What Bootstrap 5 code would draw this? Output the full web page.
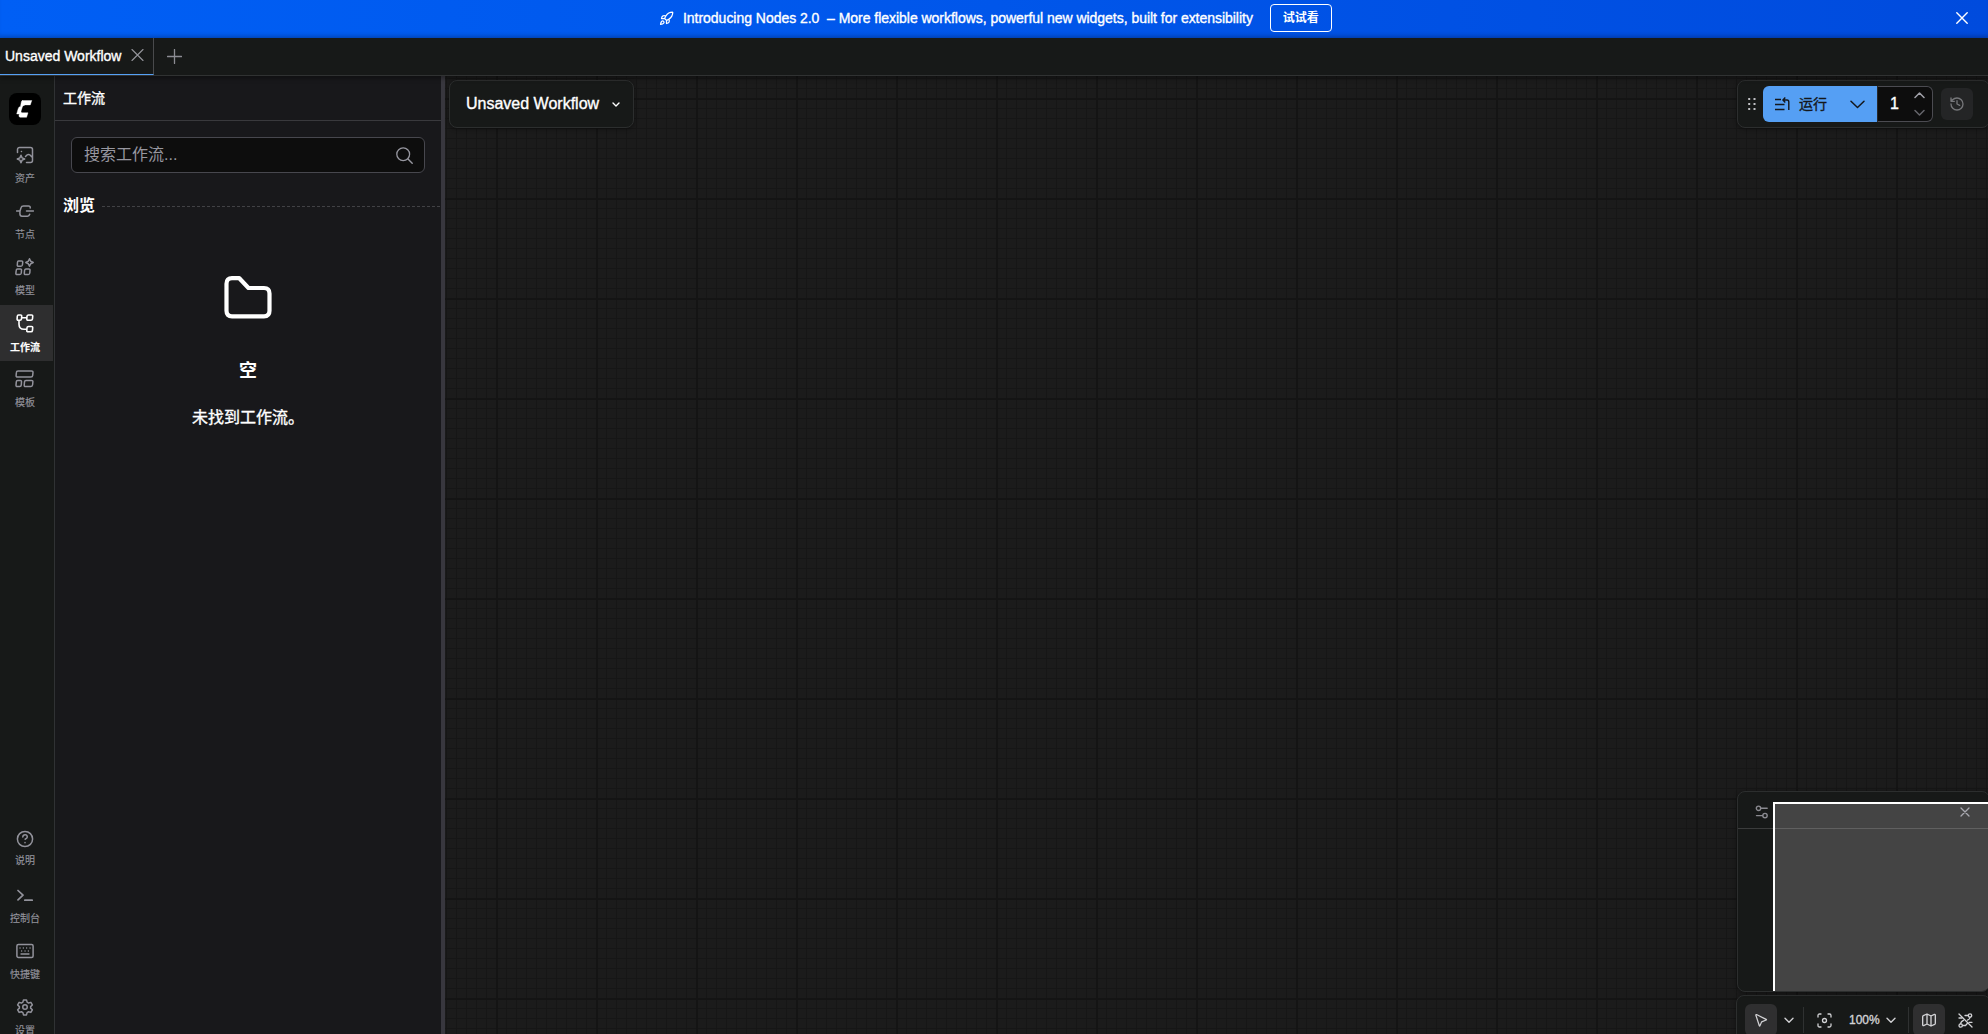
<!DOCTYPE html>
<html lang="zh-CN" data-bs-theme="dark">
<head>
<meta charset="utf-8">
<meta name="viewport" content="width=device-width, initial-scale=1">
<title>Unsaved Workflow</title>
<link rel="stylesheet" href="https://cdn.jsdelivr.net/npm/bootstrap@5.3.0/dist/css/bootstrap.min.css">
<style>
html,body{height:100%}
body{font-family:"Liberation Sans","Noto Sans CJK SC",sans-serif;font-size:14px;line-height:1.2;background:#171918;color:#fff;overflow:hidden}
svg{display:block;flex:none;fill:none;stroke:currentColor;stroke-width:2;stroke-linecap:round;stroke-linejoin:round}
.heavy{-webkit-text-stroke:.35px currentColor}
.banner{height:38px;flex:none;background:linear-gradient(90deg,#005ff5,#0056ea 50%,#004bdd);box-shadow:inset 0 -5px 5px -3px #0003;padding-bottom:2px}
.banner .rocket{margin-left:659px}
.banner-text{margin-left:9px;white-space:pre;letter-spacing:-.03px}
.banner-btn{margin-left:17px;width:62px;height:28px;padding:0;border:1px solid #fff;border-radius:4px;font-size:12px;font-weight:700;color:#fff;line-height:24px}
.tabs{height:38px;flex:none;border-bottom:1px solid #303232;position:relative;z-index:3;box-shadow:0 2px 5px #0006}
.tab-item{width:154px;height:37px;border-right:1px solid #494a4c;border-bottom:1px solid #55a0f5;padding:0 0 0 5px}
.tab-item svg{margin-bottom:2px}
.rail{width:55px;flex:none;border-right:1px solid #303234;padding-top:17px}
.logo-tile{width:32px;height:32px;border-radius:8px;background:#000;margin-left:9px;margin-bottom:12px;padding:7px}
.rail-item{height:56px;width:53px;flex:none;padding:9px 3px 0 0;color:#92929b;font-size:10px;line-height:14px;gap:8px;-webkit-text-stroke:.15px currentColor}
.rail-item svg{margin-right:1px}
.rail-item.active{background:#2e2e2f;color:#fff;font-weight:700}
.panel{width:386px;flex:none;background:#18181b}
.panel-head{height:45px;border-bottom:1px solid #39393d;padding:1px 0 0 8px}
.search-box{height:36px;margin:16px 16px 0;border:1px solid #47474e;border-radius:6px;background:#0d0d0d;color:#9797a0;font-size:16px;padding:0 11px 0 12px}
.browse{margin-top:21px;height:24px;padding-left:8px;font-size:16px;font-weight:700;gap:7px}
.dashes{height:1px;flex:1;background:repeating-linear-gradient(90deg,#414145 0 3px,transparent 3px 5px)}
.gutter{width:4px;flex:none;background:#38373e}
.graph{flex:1;min-width:0;background:
 linear-gradient(90deg,#141414 2px,transparent 2px) 51px 0/100px 100px,
 linear-gradient(#141414 2px,transparent 2px) 0 22px/100px 100px,
 linear-gradient(90deg,#161616 1px,transparent 1px) 1px 0/10px 10px,
 linear-gradient(#161616 1px,transparent 1px) 0 2px/10px 10px,#1b1b1b;padding:4px 0 0 4px}
.float-box{background:#171918;border:1px solid #2c2e2e;border-radius:8px;box-shadow:0 1px 4px #0006}
.crumb{width:185px;height:48px;padding:0 12px 1px 16px;font-size:16px}
.runbar{width:253px;height:48px;margin-right:-2px;padding:0 0 0 10px}
.run-btn{width:114px;height:36px;background:#559ff4;color:#14171b;border-radius:6px 0 0 6px;font-size:14px;padding:0 12px;margin-left:7px}
.count-box{width:56px;height:36px;background:#0d0d0d;border:1px solid #4b4b51;border-left-color:#26282b;border-radius:0 6px 6px 0;padding:0 7px 0 12px;font-size:16px}
.history{width:32px;height:32px;border-radius:6px;background:#242526;color:#76777a;margin-left:8px}
.bottom-stack{width:254px;margin-right:-2px}
.minimap{width:253px;height:201px;margin-left:1px;position:relative;overflow:hidden}
.minimap-head{height:37px;border-bottom:1px solid #3b3c3c;color:#8a8a90}
.viewport{position:absolute;left:35px;top:10px;right:-4px;bottom:0;border:2px solid #fff;border-width:2px 0 0 2px;background:#444}
.viewport-line{height:1px;margin-top:24px;background:#606060}
.toolbar-box{height:50px;width:255px;margin-top:3px;padding:8px 0 0 8px;color:#d2d2d5}
.tool-on{width:32px;height:32px;border-radius:6px;background:#2f2f30}
.bar-line{width:1px;height:26px;background:#2f3131}
.center-line{height:32px}
</style>
<script src="https://cdn.jsdelivr.net/npm/bootstrap@5.3.0/dist/js/bootstrap.bundle.min.js"></script>
</head>
<body class="d-flex flex-column">
<header class="banner d-flex align-items-center">
 <svg class="rocket" width="15" height="15" viewBox="0 0 24 24"><path d="M4.500 16.500c-1.500 1.300-2 5-2 5s3.700-.5 5-2c.7-.8.7-2.100-.1-2.900a2.200 2.200 0 0 0-2.900-.1zM12 15l-3-3a22 22 0 0 1 2-4A12.900 12.900 0 0 1 22 2c0 2.700-.8 7.500-6 11a22 22 0 0 1-4 2zM9 12H4s.6-3 2-4c1.600-1.100 5 0 5 0M12 15v5s3-.6 4-2c1.100-1.600 0-5 0-5"/></svg>
 <span class="banner-text heavy">Introducing Nodes 2.0&nbsp; – More flexible workflows, powerful new widgets, built for extensibility</span>
 <button class="btn banner-btn">试试看</button>
 <svg class="ms-auto" style="margin-right:20px" width="12" height="12" viewBox="0 0 12 12"><path stroke-width="1.400" d="M.8.8l10.400 10.400M11.200.8L.8 11.200"/></svg>
</header>
<nav class="tabs d-flex align-items-center">
 <div class="tab-item d-flex align-items-center"><span class="heavy">Unsaved Workflow</span>
  <svg class="ms-auto me-2" width="15" height="12" viewBox="0 0 12 12"><path stroke="#94949b" stroke-width="1.100" d="M.5.5l11 11M11.500.5l-11 11"/></svg></div>
 <svg style="margin-left:13px" width="15" height="15" viewBox="0 0 15 15"><path stroke="#8c8c93" stroke-width="1.300" d="M7.500 .5v14M.5 7.500h14"/></svg>
</nav>
<main class="d-flex flex-grow-1" style="min-height:0">
 <aside class="rail d-flex flex-column">
  <div class="logo-tile"><svg width="18" height="18" viewBox="0 0 18 18"><path fill="#fff" stroke-width=".4" d="M6.500 .4h9.300l-1.500 4.500H9.200q-2.200.3-2.800 1.900L5 11.200q-.1 1.400.9 1.600H12L10.600 17.300H4.200q-1.300-.2-1.300-1.500l.4-1.800H.7L2.100 8.900q.5-2.300 2.400-2.500L5.300 2Q5.600.5 6.500.4z"/></svg></div>
  <a class="rail-item d-flex flex-column align-items-center text-decoration-none"><svg width="18" height="18" viewBox="0 0 18 18"><path stroke-width="1.500" d="M1.500 6.500V3.500a2 2 0 0 1 2-2h11a2 2 0 0 1 2 2v11a2 2 0 0 1-2 2H10.500M9.500 10.500l1.500-1.500q1.500-1.200 3 0l2.200 2.200M5 9.300l1.100 2.600 2.600 1.100-2.600 1.100L5 16.700l-1.100-2.600L1.300 13l2.600-1.100zM5.400 5.400h.1"/></svg>资产</a>
  <a class="rail-item d-flex flex-column align-items-center text-decoration-none"><svg width="18" height="18" viewBox="0 0 18 18"><path stroke-width="1.500" d="M.5 9H4M10.500 9h7M4 9l-.1 2.700Q4 14.200 6 14.200h5.500q1.700 0 2.200-1.900M4 9l1-3.200Q5.500 4 7.500 4h5q2 0 1.700 2"/></svg>节点</a>
  <a class="rail-item d-flex flex-column align-items-center text-decoration-none"><svg width="19" height="18" viewBox="0 0 19 18"><path stroke-width="1.500" d="M14.500.8l1.200 2.500 2.500 1.200-2.500 1.200-1.200 2.500-1.200-2.500L10.800 4.500l2.500-1.200zM3.500 3h3q1.300 0 1.200 1.300l-.3 2.700q-.2 1.200-1.400 1.200H3.500Q2.200 8.200 2.300 7l.2-2.800Q2.600 3 3.500 3zM2.500 11h2.800q1.300 0 1.200 1.300l-.2 2.700q-.2 1.500-1.500 1.500H2Q.8 16.500.9 15.200l.3-2.800Q1.300 11 2.500 11zM11 11h2.800q1.300 0 1.200 1.300l-.2 2.700q-.2 1.500-1.500 1.500h-2.800q-1.300 0-1.200-1.300l.3-2.800Q9.800 11 11 11z"/></svg>模型</a>
  <a class="rail-item active d-flex flex-column align-items-center text-decoration-none"><svg width="18" height="19" viewBox="0 0 18 19"><path stroke-width="1.600" d="M2.500 1h2q1.300 0 1.200 1.200l-.2 2.600q-.2 1.400-1.500 1.400H2.300Q1 6.200 1.100 5l.2-2.700Q1.400 1 2.500 1zM12.500 1h3q1.300 0 1.200 1.200l-.2 2.600q-.2 1.400-1.500 1.400h-3q-1.300 0-1.200-1.300l.2-2.600Q11.300 1 12.500 1zM12.500 12.500h3q1.300 0 1.200 1.200l-.2 2.600q-.2 1.500-1.500 1.500h-3q-1.300 0-1.200-1.300l.2-2.700q.1-1.300 1.500-1.300zM5.800 3.700h5M3 6.200v4q0 5 5 5h2.500"/></svg>工作流</a>
  <a class="rail-item d-flex flex-column align-items-center text-decoration-none"><svg width="19" height="18" viewBox="0 0 19 18"><path stroke-width="1.500" d="M3 1h13.500q1.600 0 1.500 1.400l-.3 3q-.2 1.600-1.700 1.600H2.500Q1 7 1.100 5.600l.3-3.200Q1.500 1 3 1zM2.600 10.500h2.700q1.300 0 1.200 1.300l-.2 3q-.2 1.700-1.500 1.700H2.300Q.9 16.500 1 15.100l.3-3.200q.1-1.400 1.300-1.400zM11 10.500h5.500q1.500 0 1.400 1.300l-.3 3q-.2 1.700-1.600 1.700h-5.500q-1.400 0-1.300-1.400l.3-3.200q.1-1.400 1.500-1.400z"/></svg>模板</a>
  <div class="mt-auto" style="margin-bottom:-11px">
   <a class="rail-item d-flex flex-column align-items-center text-decoration-none" style="gap:6px"><svg width="18" height="18" viewBox="0 0 18 18"><circle cx="9" cy="9" r="7.600" stroke-width="1.500"/><path stroke-width="1.500" d="M6.800 7q.2-2.200 2.300-2.200T11.300 7q0 1.200-2.200 2.200M9 12.600v.1"/></svg>说明</a>
   <a class="rail-item d-flex flex-column align-items-center text-decoration-none"><svg width="16" height="18" viewBox="0 0 16 18"><path stroke-width="1.700" d="M1 4.500l5 4.700-5 4.700M7.800 14.200h7.500"/></svg>控制台</a>
   <a class="rail-item d-flex flex-column align-items-center text-decoration-none"><svg width="18" height="18" viewBox="0 0 18 18"><rect x=".9" y="2.500" width="16.200" height="13" rx="1.500" stroke-width="1.500"/><path stroke-width="1.300" d="M4 6h.1M7.300 6h.1M10.600 6h.1M14 6h.1M5.600 9h.1M9 9h.1M12.300 9h.1M5 12h8"/></svg>快捷键</a>
   <a class="rail-item d-flex flex-column align-items-center text-decoration-none"><svg width="18" height="18" viewBox="0 0 24 24"><circle cx="12" cy="12" r="3"/><path d="M10 2.500h4l.8 3 2 1.200 3-.9 2 3.500-2.300 2.200v2l2.300 2.200-2 3.500-3-.9-2 1.200-.8 3h-4l-.8-3-2-1.200-3 .9-2-3.500 2.300-2.200v-2L2.200 9.300l2-3.500 3 .9 2-1.200z"/></svg>设置</a>
  </div>
 </aside>
 <section class="panel">
  <div class="panel-head d-flex align-items-center heavy">工作流</div>
  <div class="search-box d-flex align-items-center justify-content-between">搜索工作流...
   <svg width="17" height="17" viewBox="0 0 17 17"><circle cx="7.200" cy="7.200" r="6.400" stroke-width="1.300"/><path stroke-width="1.400" d="M12 12l4.200 4.200"/></svg></div>
  <div class="browse d-flex align-items-center"><span>浏览</span><i class="dashes"></i></div>
  <div class="d-flex flex-column align-items-center" style="padding-top:58px">
   <svg width="48" height="43" viewBox="0 0 48 43"><path stroke-width="4.200" d="M8 2.200h7.300L24.500 12H40q5.500 0 5.500 5.500v17.300q0 5.500-5.500 5.500H8q-5.500 0-5.500-5.500V7.700Q2.500 2.200 8 2.200z"/></svg>
   <div class="fw-bold" style="font-size:18px;margin-top:42px">空</div>
   <div class="heavy" style="font-size:16px;margin-top:25px">未找到工作流。</div>
  </div>
 </section>
 <div class="gutter"></div>
 <section class="graph d-flex flex-column justify-content-between">
  <div class="d-flex justify-content-between">
   <div class="float-box crumb d-flex align-items-center justify-content-between heavy">Unsaved Workflow<svg width="10" height="10" viewBox="0 0 10 10"><path stroke-width="1.400" d="M2 4l3 3 3-3"/></svg></div>
   <div class="float-box runbar d-flex align-items-center">
    <svg width="8" height="14" viewBox="0 0 8 14"><path stroke="#c0c0c3" stroke-width="1.800" stroke-linecap="butt" d="M.2 2h2M5.500 2h2M.2 7h2M5.500 7h2M.2 12h2M5.500 12h2"/></svg>
    <div class="run-btn d-flex align-items-center"><svg width="15" height="14" viewBox="0 0 15 14"><path stroke-width="1.400" stroke-linecap="butt" d="M0 2.500h6M0 7.500h9.500M0 12.500h9.500M8 3h4q1.800 0 1.800 2v8M10.300.6L7.900 3l2.400 2.400"/></svg><span class="heavy" style="margin-left:9px">运行</span><svg class="ms-auto" width="15" height="9" viewBox="0 0 15 9"><path stroke-width="1.500" d="M1 1.200l6.500 6.300L14 1.200"/></svg></div>
    <div class="count-box d-flex align-items-center justify-content-between"><span class="heavy">1</span><svg width="11" height="24" viewBox="0 0 11 24"><path stroke="#a1a1a9" stroke-width="1.500" d="M1 5.500l4.500-4.500L10 5.500"/><path stroke="#65656b" stroke-width="1.500" d="M1 18.500L5.500 23l4.500-4.500"/></svg></div>
    <div class="history d-flex align-items-center justify-content-center"><svg width="16" height="16" viewBox="0 0 24 24"><path d="M3 12a9 9 0 1 0 9-9 9.700 9.700 0 0 0-6.700 2.700L3 8M3 3v5h5M12 7v5l4 2"/></svg></div>
   </div>
  </div>
  <div class="bottom-stack align-self-end d-flex flex-column" style="margin-bottom:-11px">
   <div class="float-box minimap">
    <div class="minimap-head d-flex align-items-center"><svg style="margin:3px 0 0 17px" width="14" height="14" viewBox="0 0 14 14"><circle cx="3.500" cy="3.300" r="2.200" stroke-width="1.400"/><circle cx="10" cy="10.600" r="2.200" stroke-width="1.400"/><path stroke-width="1.400" d="M5.700 3.300h6.500M1.500 10.600h6"/></svg></div>
    <div class="viewport"><svg style="position:absolute;left:185px;top:3px" width="10" height="10" viewBox="0 0 10 10"><path stroke="#a9a9b0" stroke-width="1.300" d="M1 1l8 8M9 1L1 9"/></svg><div class="viewport-line"></div></div>
   </div>
   <div class="float-box toolbar-box"><div class="d-flex align-items-center center-line">
    <div class="tool-on d-flex align-items-center justify-content-center"><svg width="15" height="15" viewBox="0 0 24 24"><path d="M3 3.500l5.500 17q.5 1 1-.1l2.700-6.200 7.300-3q1-.5 0-1L4 2.500q-1.200-.4-1 1z"/></svg></div>
    <svg style="margin-left:7px" width="10" height="7" viewBox="0 0 10 7"><path stroke-width="1.400" d="M1 1.200l4 4 4-4"/></svg>
    <i class="bar-line" style="margin-left:9px"></i>
    <svg style="margin-left:13px" width="15" height="15" viewBox="0 0 15 15"><circle cx="7.500" cy="7.500" r="2" stroke-width="1.300"/><path stroke-width="1.300" d="M1 4V2.500Q1 1 2.500 1H4M11 1h1.500Q14 1 14 2.500V4M14 11v1.500q0 1.500-1.500 1.500H11M4 14H2.500Q1 14 1 12.500V11"/></svg>
    <span style="font-size:12px;margin-left:17px;width:31px" class="heavy">100%</span>
    <svg style="margin-left:6px" width="10" height="7" viewBox="0 0 10 7"><path stroke-width="1.400" d="M1 1.200l4 4 4-4"/></svg>
    <i class="bar-line" style="margin-left:12px"></i>
    <div class="tool-on d-flex align-items-center justify-content-center" style="margin-left:4px"><svg width="16" height="16" viewBox="0 0 24 24"><path d="M2.500 7q0-1 1-1.500L9 3l6 3 5-2.300q1.500-.5 1.500 1V17q0 1-1 1.500L15 21l-6-3-5 2.300q-1.500.5-1.500-1zM9 3v15M15 6v15"/></svg></div>
    <svg style="margin-left:13px" width="15" height="15" viewBox="0 0 15 15"><path stroke-width="1.300" d="M1 1l13 13"/><circle cx="12" cy="2.500" r="1.700" stroke-width="1.300"/><circle cx="2.700" cy="12.500" r="1.700" stroke-width="1.300"/><path stroke-width="1.300" d="M10.300 2.500H7M4.500 12.500h3l2-2.300M12 4.200q0 2-2.500 3M2.700 10.800q0-2.200 2.800-3.500M11 9.300h3M1 5h3"/></svg>
   </div></div>
  </div>
 </section>
</main>
</body>
</html>
